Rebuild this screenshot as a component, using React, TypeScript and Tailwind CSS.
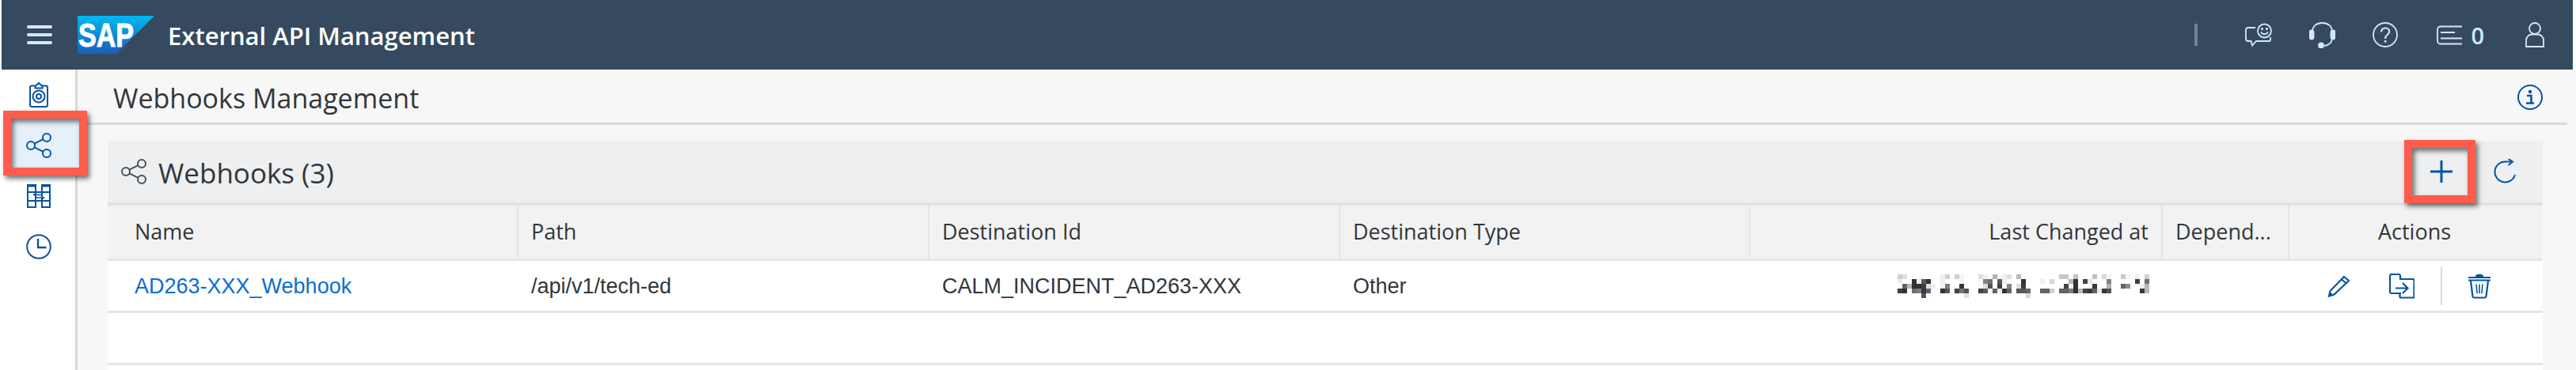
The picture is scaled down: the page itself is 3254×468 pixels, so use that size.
import type { ReactNode } from "react";

const BLUE = "#0854a0";
const PALE = "#d1e8ff";

// blurred date cells: row -> [col, grey]
const BLUR: [number, [number, string][]][] = [
  [0, [[0, "#d0d0d0"], [1, "#e0e0e0"], [9, "#f0f0f0"], [10, "#d0d0d0"], [12, "#d0d0d0"], [13, "#f5f5f5"], [17, "#e0e0e0"], [18, "#f0f0f0"], [20, "#b0b0b0"], [22, "#f0f0f0"], [23, "#e0e0e0"], [25, "#b8b8b8"],
    [34, "#c8c8c8"], [35, "#c8c8c8"], [37, "#c0c0c0"], [41, "#c0c0c0"], [43, "#d8d8d8"], [44, "#f5f5f5"], [47, "#c8c8c8"], [48, "#f5f5f5"], [50, "#f0f0f0"], [52, "#d0d0d0"]]],
  [1, [[0, "#eeeeee"], [3, "#30343a"], [4, "#f0f0f0"], [5, "#555a60"], [6, "#2f3338"], [9, "#f0f0f0"], [13, "#f5f5f5"], [17, "#f8f8f8"], [18, "#808488"], [19, "#6f7378"], [21, "#555a60"], [22, "#f0f0f0"], [26, "#2f3338"],
    [30, "#f0f0f0"], [32, "#d8d8d8"], [36, "#b8b8b8"], [37, "#2f3338"], [39, "#3f4348"], [40, "#e8e8e8"], [44, "#808488"], [50, "#3a3e44"], [52, "#6a6d72"]]],
  [2, [[1, "#60646a"], [2, "#b8babd"], [3, "#2f3338"], [4, "#2f3338"], [5, "#3a3e44"], [6, "#dddddd"], [7, "#f0f0f0"], [9, "#f0f0f0"], [10, "#7a7d82"], [13, "#35393f"], [17, "#f8f8f8"], [18, "#e0e0e0"], [19, "#505459"], [21, "#3f4348"], [23, "#808488"], [25, "#e0e0e0"], [26, "#3a3e44"],
    [35, "#3f4348"], [36, "#f0f0f0"], [37, "#2f3338"], [41, "#35393f"], [44, "#b0b0b0"], [47, "#60646a"], [48, "#8a8d90"], [51, "#f0f0f0"], [52, "#b8b8b8"]]],
  [3, [[0, "#3a3e44"], [1, "#2f3338"], [3, "#6a6d72"], [4, "#7a7d82"], [5, "#35393f"], [6, "#60646a"], [9, "#2f3338"], [10, "#55595e"], [12, "#3f4348"], [13, "#70747a"], [14, "#505459"], [17, "#3f4348"], [18, "#55595e"], [19, "#f5f5f5"], [20, "#60646a"], [21, "#f0f0f0"], [22, "#2f3338"], [23, "#60646a"], [25, "#55595e"], [26, "#55595e"],
    [27, "#60646a"], [30, "#60646a"], [31, "#60646a"], [32, "#d0d0d0"], [34, "#60646a"], [35, "#60646a"], [36, "#7a7d82"], [37, "#2f3338"], [38, "#b8b8b8"], [39, "#3f4348"], [40, "#35393f"], [41, "#60646a"], [42, "#e8e8e8"], [43, "#35393f"], [44, "#505459"], [51, "#35393f"], [52, "#b8b8b8"]]],
  [4, [[5, "#505459"], [14, "#e0e0e0"], [27, "#d8d8d8"]]],
];

function BlurredDate() {
  return (
    <svg width="318" height="30" viewBox="0 0 318 30" shapeRendering="crispEdges">
      {BLUR.map(([r, cells]) =>
        cells.map(([c, fill]) => <rect key={`${r}-${c}`} x={c * 6} y={r * 6} width="6" height="6" fill={fill} />)
      )}
    </svg>
  );
}

function Ico({ w, h, children, color = BLUE, sw = 2 }: { w: number; h: number; children: ReactNode; color?: string; sw?: number }) {
  return (
    <svg width={w} height={h} viewBox={`0 0 ${w} ${h}`} fill="none" stroke={color} strokeWidth={sw} className="block shrink-0">
      {children}
    </svg>
  );
}

function ShareIcon({ color = BLUE }: { color?: string }) {
  return (
    <Ico w={32} h={32} color={color}>
      <circle cx="6" cy="16" r="5" />
      <circle cx="26" cy="6" r="5" />
      <circle cx="26" cy="26" r="5" />
      <path d="M10.5 13.7 21.5 8.2M10.5 18.3 21.5 23.8" />
    </Ico>
  );
}

function ClipboardIcon() {
  return (
    <Ico w={24} h={32}>
      <path d="M8 4.5H3a2 2 0 0 0-2 2V29a2 2 0 0 0 2 2h18a2 2 0 0 0 2-2V6.500a2 2 0 0 0-2-2h-5" />
      <path d="M7.500 7.500V5L12 1l4.500 4v2.500z" />
      <circle cx="12" cy="18" r="7.500" />
      <circle cx="12" cy="18" r="3" />
    </Ico>
  );
}

function SplitIcon() {
  return (
    <Ico w={30} h={30}>
      <rect x="1" y="1" width="10" height="28" />
      <rect x="19" y="1" width="10" height="28" />
      <path d="M0 2h12M18 2h12" strokeWidth="3" />
      <path d="M1 10h10M1 21h10M19 10h10M19 21h10" />
      <path d="M11 10h8M11 21h8" />
      <path d="M8 13.500h12M10 17h12" strokeWidth="1.500" />
      <path d="M11 11.500 8 13.500M19 19l3-2" strokeWidth="1.500" />
    </Ico>
  );
}

function ClockIcon() {
  return (
    <Ico w={32} h={32}>
      <circle cx="16" cy="16" r="14.800" />
      <path d="M15 6v11h10.500" strokeWidth="2.400" />
    </Ico>
  );
}

function Hamburger() {
  return (
    <svg width="32" height="24" viewBox="0 0 32 24" className="block shrink-0" fill={PALE}>
      <rect x="0" y="0" width="32" height="4" rx="2" />
      <rect x="0" y="10" width="32" height="4" rx="2" />
      <rect x="0" y="20" width="32" height="4" rx="2" />
    </svg>
  );
}

function SapLogo() {
  return (
    <svg width="97" height="48" viewBox="0 0 97 48" className="block shrink-0">
      <defs>
        <linearGradient id="sapFill" x1="0" y1="0" x2="0" y2="1">
          <stop offset="0%" stopColor="#00b8f1" />
          <stop offset="40%" stopColor="#0a95dc" />
          <stop offset="100%" stopColor="#1e5cb9" />
        </linearGradient>
      </defs>
      <path d="M0 0h97L49 48H0z" fill="url(#sapFill)" />
      <text x="1" y="39" fill="#fff" stroke="#fff" strokeWidth="1" fontFamily="'Liberation Sans', sans-serif" fontWeight="700" fontSize="43" textLength="70" lengthAdjust="spacingAndGlyphs">
        SAP
      </text>
    </svg>
  );
}

function ChatIcon() {
  return (
    <Ico w={34} h={30} color={PALE} sw={1.800}>
      <circle cx="24.500" cy="10" r="8.500" />
      <circle cx="21.500" cy="7.500" r="0.700" fill={PALE} />
      <circle cx="27.500" cy="7.500" r="0.700" fill={PALE} />
      <path d="M20 11.500c2 3.500 7 3.500 9 0" />
      <path d="M13 6H4a3 3 0 0 0-3 3v11a3 3 0 0 0 3 3h3.500l1.500 5.500L14 23h16a2 2 0 0 0 2-2v-3" />
    </Ico>
  );
}

function HeadsetIcon() {
  return (
    <Ico w={33} h={33} color={PALE} sw={1.800}>
      <path d="M4 12C4 5 9.500 1 16.500 1S29 5 29 12" />
      <path d="M29 20c0 5-3 9-10 10" />
      <rect x="0.500" y="10.500" width="5" height="11" rx="2.500" fill={PALE} />
      <rect x="27.500" y="10.500" width="5" height="11" rx="2.500" fill={PALE} />
      <circle cx="15" cy="29.500" r="3" fill={PALE} />
    </Ico>
  );
}

function HelpIcon() {
  return (
    <Ico w={32} h={32} color={PALE} sw={1.800}>
      <circle cx="16" cy="16" r="15" />
      <path d="M11 12.500c0-3 2.200-5 5.200-5s5 2 5 4.500c0 4-5 4-5 8v1" strokeWidth="2.200" />
      <circle cx="16.200" cy="24.500" r="1.400" fill={PALE} stroke="none" />
    </Ico>
  );
}

function NotifIcon() {
  return (
    <Ico w={33} h={25} color={PALE} sw={1.800}>
      <path d="M33 1.500H6a4 4 0 0 0-4 4V20a4 4 0 0 0 3 3.500h28" />
      <path d="M6 9h18M6 16.500h27" />
    </Ico>
  );
}

function UserIcon() {
  return (
    <Ico w={24} h={32} color={PALE} sw={1.800}>
      <circle cx="12" cy="8" r="7" />
      <path d="M1 31V23a7.500 7.500 0 0 1 7.500-7.500h7A7.500 7.500 0 0 1 23 23v8z" />
    </Ico>
  );
}

function InfoIcon() {
  return (
    <Ico w={32} h={32}>
      <circle cx="16" cy="16" r="15" />
      <circle cx="16" cy="9" r="2.200" fill={BLUE} stroke="none" />
      <path d="M12 14h5.500v9.500M11 23.500h10" strokeWidth="2.600" />
    </Ico>
  );
}

function PlusIcon() {
  return (
    <Ico w={28} h={28} sw={3}>
      <path d="M14 0v28M0 14h28" />
    </Ico>
  );
}

function RefreshIcon() {
  return (
    <Ico w={28} h={32}>
      <path d="M24 3.500H15A13 13 0 1 0 27 20" />
      <path d="M18.500 0 24 3.500 18.500 8" />
    </Ico>
  );
}

function PencilIcon() {
  return (
    <Ico w={28} h={28} sw={2.200}>
      <path d="M21 2 27 7 8.500 24.500 2 26.500 3.500 20z" />
      <path d="M18 5.500 24 10.500" />
      <path d="M1 27.500 3 21l4.500 4z" fill={BLUE} stroke="none" />
    </Ico>
  );
}

function ImportIcon() {
  return (
    <Ico w={32} h={32} sw={2.200}>
      <path d="M15 25H3a2 2 0 0 1-2-2V3a2 2 0 0 1 2-2h9a2 2 0 0 1 2 2v3" />
      <path d="M13 7h17a1.500 1.500 0 0 1 1.500 1.500V29a1.500 1.500 0 0 1-1.500 1.500H15a1.500 1.500 0 0 1-1.500-1.500v-4" />
      <path d="M8 18.500h15M17 12l6.500 6.500L17 25" />
    </Ico>
  );
}

function TrashIcon() {
  return (
    <Ico w={28} h={32} sw={2.200}>
      <path d="M0 5h28M0 8.500h28" strokeWidth="1.800" />
      <path d="M10 4c0-3 8-3 8 0z" fill={BLUE} />
      <path d="M3 9 5.500 29a2 2 0 0 0 2 1.500h13a2 2 0 0 0 2-1.500L25 9" />
      <path d="M10 13.500 11 25M14 13.500V25M18 13.500 17 25" strokeWidth="1.600" />
    </Ico>
  );
}

const HEAD = "font-['Open_Sans',sans-serif]";
const COLS = "grid grid-cols-[519px_519px_519px_518px_521px_160px_320px]";
const TH = "flex items-center px-[16px] border-r-2 border-[#e5e5e5]";
const TD = "flex items-center pt-[2px]";

function Mark({ className }: { className: string }) {
  return (
    <div
      className={`absolute border-[10px] border-[#ff5c4d] shadow-[3px_4px_6px_rgba(0,0,0,0.55),inset_3px_4px_6px_rgba(0,0,0,0.55)] ${className}`}
    />
  );
}

export default function App() {
  return (
    <div className="w-[3254px] h-[468px] overflow-hidden bg-white text-[#32363a]">
      {/* Shell bar */}
      <header className="ml-[2px] mr-[4px] h-[88px] bg-[#354a5f] flex items-center">
        <div className="ml-[32px]">
          <Hamburger />
        </div>
        <div className="ml-[32px]">
          <SapLogo />
        </div>
        <div className={`ml-[17px] pt-[2px] text-white font-semibold text-[31px] leading-none ${HEAD}`}>External API Management</div>
        <div className="ml-auto flex items-center">
          <div className="w-[4px] h-[28px] bg-[#6d839a] mr-[60px]" />
          <ChatIcon />
          <div className="ml-[47px]">
            <HeadsetIcon />
          </div>
          <div className="ml-[47px]">
            <HelpIcon />
          </div>
          <div className="ml-[48px]">
            <NotifIcon />
          </div>
          <div className={`ml-[11px] text-[29px] font-semibold text-[#d1e8ff] leading-none ${HEAD}`}>0</div>
          <div className="ml-[52px] mr-[36px]">
            <UserIcon />
          </div>
        </div>
      </header>

      <div className="flex h-[380px]">
        {/* Side navigation */}
        <nav className="w-[98px] shrink-0 border-r-[3px] border-[#d9d9d9] flex flex-col items-center pl-[3px]">
          <div className="h-[64px] w-full flex items-center justify-center">
            <ClipboardIcon />
          </div>
          <div className="relative h-[64px] w-full flex items-center justify-center">
            <Mark className="z-10 left-[1px] top-[-12px] w-[106px] h-[82px] bg-[#e5f0fa]" />
            <div className="relative z-20">
              <ShareIcon />
            </div>
          </div>
          <div className="h-[64px] w-full flex items-center justify-center">
            <SplitIcon />
          </div>
          <div className="h-[64px] w-full flex items-center justify-center">
            <ClockIcon />
          </div>
        </nav>

        {/* Page */}
        <main className="flex-1 bg-[#f7f7f7]">
          <div className="mr-[11px] h-[70px] border-b-[3px] border-[#d9d9d9] pl-[45px] pr-[31px] pt-[2px] flex items-center justify-between">
            <h1 className={`mt-[2px] text-[34px] leading-none ${HEAD}`}>Webhooks Management</h1>
            <InfoIcon />
          </div>

          <section className="ml-[38px] mr-[42px] mt-[20px]">
            <div className="h-[82px] bg-[#edeff0] border-b-4 border-[#e0e2e4] pl-[17px] pr-[34px] flex items-center">
              <ShareIcon color="#4a5058" />
              <h2 className={`ml-[15px] mt-[2px] text-[35px] leading-none ${HEAD}`}>Webhooks (3)</h2>
              <div className="ml-auto flex items-center">
                <div className="relative mr-[52px]">
                  <Mark className="left-[-33px] top-[-26px] w-[90px] h-[80px]" />
                  <PlusIcon />
                </div>
                <RefreshIcon />
              </div>
            </div>

            {/* Table */}
            <div className={`${COLS} h-[70px] bg-[#f2f2f2] border-b-[3px] border-[#e5e5e5] text-[27px] ${HEAD}`}>
              <div className={`${TH} !pl-[34px]`}>Name</div>
              <div className={TH}>Path</div>
              <div className={TH}>Destination Id</div>
              <div className={TH}>Destination Type</div>
              <div className={`${TH} justify-end`}>Last Changed at</div>
              <div className={TH}>Depend...</div>
              <div className="flex items-center justify-center pr-[4px]">Actions</div>
            </div>
            <div className={`${COLS} h-[66px] bg-white border-b-[3px] border-[#e5e5e5] text-[27px] font-['Liberation_Sans',sans-serif]`}>
              <div className={`${TD} pl-[34px] text-[#0a6ed1]`}>AD263-XXX_Webhook</div>
              <div className={`${TD} pl-[16px]`}>/api/v1/tech-ed</div>
              <div className={`${TD} pl-[16px]`}>CALM_INCIDENT_AD263-XXX</div>
              <div className={`${TD} pl-[16px]`}>Other</div>
              <div className="flex items-center justify-end pr-[17px]">
                <BlurredDate />
              </div>
              <div />
              <div className="flex items-center">
                <div className="ml-[48px]">
                  <PencilIcon />
                </div>
                <div className="ml-[50px]">
                  <ImportIcon />
                </div>
                <div className="ml-[33px] w-[2px] h-[48px] bg-[#d9d9d9]" />
                <div className="ml-[33px]">
                  <TrashIcon />
                </div>
              </div>
            </div>
            <div className="h-[66px] bg-white border-b-[3px] border-[#e5e5e5]" />
            <div className="h-[20px] bg-white" />
          </section>
        </main>
      </div>
    </div>
  );
}
